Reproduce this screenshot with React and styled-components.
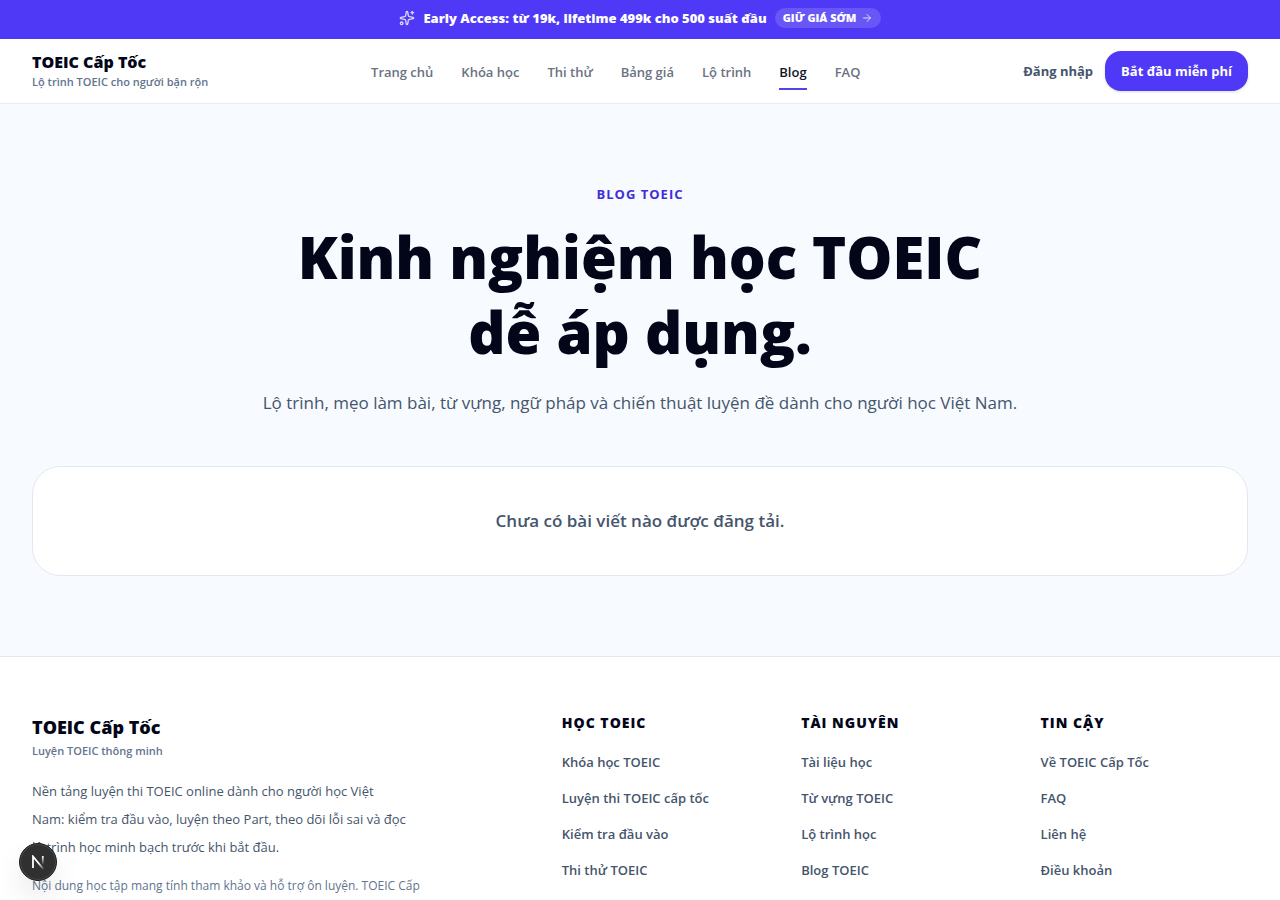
import React from 'react';
import styled, { createGlobalStyle } from 'styled-components';
import { ArrowRight, Sparkles } from 'lucide-react';

const navLinks = ['Trang chủ', 'Khóa học', 'Thi thử', 'Bảng giá', 'Lộ trình', 'Blog', 'FAQ'];

const footerColumns = [
  {
    title: 'Học TOEIC',
    links: ['Khóa học TOEIC', 'Luyện thi TOEIC cấp tốc', 'Kiểm tra đầu vào', 'Thi thử TOEIC'],
  },
  {
    title: 'Tài nguyên',
    links: ['Tài liệu học', 'Từ vựng TOEIC', 'Lộ trình học', 'Blog TOEIC'],
  },
  {
    title: 'Tin cậy',
    links: ['Về TOEIC Cấp Tốc', 'FAQ', 'Liên hệ', 'Điều khoản'],
  },
];

const GlobalStyle = createGlobalStyle`
  * {
    box-sizing: border-box;
    margin: 0;
    padding: 0;
  }

  body {
    font-family: 'Segoe UI', 'Open Sans', 'Noto Sans', sans-serif;
    color: #020618;
    background: #f7fbff;
  }

  a {
    color: inherit;
    text-decoration: none;
  }

  ul {
    list-style: none;
  }
`;

const Banner = styled.div`
  display: flex;
  justify-content: center;
  align-items: center;
  gap: 8px;
  padding: 8px 16px 11px;
  background: #4f39f6;
  color: #fff;
  font-size: 13px;
  font-weight: 800;
  line-height: 20px;

  svg {
    opacity: 0.8;
  }
`;

const BannerLink = styled.a`
  display: flex;
  align-items: center;
  gap: 4px;
  padding: 0 8px;
  border-radius: 10px;
  background: rgba(255, 255, 255, 0.15);
  font-size: 11px;
  font-weight: 800;
  text-transform: uppercase;
`;

const Header = styled.header`
  display: flex;
  justify-content: space-between;
  align-items: center;
  height: 65px;
  padding: 0 32px;
  background: #fff;
  border-bottom: 1px solid #e8ecf2;
`;

const Brand = styled.a`
  display: block;
`;

const BrandName = styled.span`
  display: block;
  font-size: ${(props) => (props.$large ? '18px' : '16px')};
  font-weight: 800;
  line-height: ${(props) => (props.$large ? '28px' : '20px')};
`;

const BrandTagline = styled.span`
  display: block;
  margin-top: 2px;
  color: #62748e;
  font-size: 11px;
  font-weight: 600;
  line-height: 16px;
`;

const Nav = styled.nav`
  display: flex;
  gap: 28px;
`;

const NavLink = styled.a`
  padding: 10px 0 6px;
  border-bottom: 2px solid ${(props) => (props.$active ? '#4f46e5' : 'transparent')};
  color: ${(props) => (props.$active ? '#101828' : '#6a7282')};
  font-size: 13px;
  font-weight: 600;
  line-height: 20px;
`;

const Actions = styled.div`
  display: flex;
  align-items: center;
  gap: 12px;
  font-size: 13px;
  font-weight: 700;
`;

const LoginLink = styled.a`
  color: #45556c;
`;

const StartButton = styled.button`
  height: 40px;
  padding: 0 16px;
  border: 0;
  border-radius: 16px;
  background: #4f39f6;
  box-shadow: 0 1px 3px rgba(0, 0, 0, 0.15);
  color: #fff;
  font: inherit;
  cursor: pointer;
`;

const Main = styled.main`
  padding: 80px 32px;
  text-align: center;
`;

const Eyebrow = styled.p`
  color: #432dd7;
  font-size: 13px;
  font-weight: 700;
  line-height: 20px;
  letter-spacing: 1px;
  text-transform: uppercase;
`;

const Title = styled.h1`
  max-width: 768px;
  margin: 15px auto 0;
  font-size: 58px;
  font-weight: 800;
  line-height: 75px;
`;

const Lead = styled.p`
  margin-top: 18px;
  color: #45556c;
  font-size: 17px;
  line-height: 32px;
`;

const EmptyCard = styled.section`
  margin-top: 47px;
  padding: 40px;
  border: 1px solid #e2e8f0;
  border-radius: 28px;
  background: #fff;
  color: #45556c;
  font-size: 17px;
  font-weight: 600;
  line-height: 28px;
`;

const Footer = styled.footer`
  display: grid;
  grid-template-columns: 12fr 5fr 5fr 5fr;
  gap: 32px;
  padding: 56px 32px;
  border-top: 1px solid #e2e8f0;
  background: #fff;
`;

const About = styled.p`
  max-width: 374px;
  margin-top: 18px;
  color: #45556c;
  font-size: 13px;
  line-height: 28px;
`;

const Disclaimer = styled.p`
  max-width: 400px;
  margin-top: 13px;
  color: #62748e;
  font-size: 12px;
  line-height: 24px;
`;

const FooterTitle = styled.h2`
  font-size: 14px;
  font-weight: 800;
  line-height: 20px;
  letter-spacing: 1px;
  text-transform: uppercase;
`;

const FooterLinks = styled.ul`
  display: grid;
  gap: 16px;
  margin-top: 19px;
  color: #45556c;
  font-size: 13px;
  font-weight: 600;
  line-height: 20px;
`;

const DevButton = styled.button`
  position: fixed;
  left: 19px;
  bottom: 19px;
  display: grid;
  place-items: center;
  width: 38px;
  height: 38px;
  border: 1px solid #1c1c1c;
  border-radius: 50%;
  background: #303030;
  box-shadow: inset 0 0 0 1px #4a4a4a, 0 16px 32px -8px rgba(0, 0, 0, 0.24);
  cursor: pointer;
`;

const DevLogo = () => (
  <svg width="14" height="14" viewBox="0 0 14 14" fill="none">
    <defs>
      <linearGradient id="diagonal" x1="8" y1="8" x2="13" y2="14" gradientUnits="userSpaceOnUse">
        <stop stopColor="#fff" />
        <stop offset="1" stopColor="#fff" stopOpacity="0.1" />
      </linearGradient>
      <linearGradient id="stem" x1="11" y1="1" x2="11" y2="10" gradientUnits="userSpaceOnUse">
        <stop stopColor="#fff" />
        <stop offset="1" stopColor="#fff" stopOpacity="0" />
      </linearGradient>
    </defs>
    <path d="M2 13V1.5L12.4 14" stroke="url(#diagonal)" strokeWidth="1.8" />
    <path d="M11.8 1V10" stroke="url(#stem)" strokeWidth="1.8" />
  </svg>
);

const App = () => {
  return (
    <>
      <GlobalStyle />
      <Banner>
        <Sparkles size={16} />
        <span>Early Access: từ 19k, lifetime 499k cho 500 suất đầu</span>
        <BannerLink href="#">
          Giữ giá sớm
          <ArrowRight size={12} />
        </BannerLink>
      </Banner>

      <Header>
        <Brand href="#">
          <BrandName>TOEIC Cấp Tốc</BrandName>
          <BrandTagline>Lộ trình TOEIC cho người bận rộn</BrandTagline>
        </Brand>
        <Nav>
          {navLinks.map((link) => (
            <NavLink href="#" key={link} $active={link === 'Blog'}>
              {link}
            </NavLink>
          ))}
        </Nav>
        <Actions>
          <LoginLink href="#">Đăng nhập</LoginLink>
          <StartButton type="button">Bắt đầu miễn phí</StartButton>
        </Actions>
      </Header>

      <Main>
        <Eyebrow>Blog TOEIC</Eyebrow>
        <Title>Kinh nghiệm học TOEIC dễ áp dụng.</Title>
        <Lead>Lộ trình, mẹo làm bài, từ vựng, ngữ pháp và chiến thuật luyện đề dành cho người học Việt Nam.</Lead>
        <EmptyCard>Chưa có bài viết nào được đăng tải.</EmptyCard>
      </Main>

      <Footer>
        <div>
          <Brand href="#">
            <BrandName $large>TOEIC Cấp Tốc</BrandName>
            <BrandTagline>Luyện TOEIC thông minh</BrandTagline>
          </Brand>
          <About>
            Nền tảng luyện thi TOEIC online dành cho người học Việt Nam: kiểm tra đầu vào, luyện theo Part, theo dõi
            lỗi sai và đọc lộ trình học minh bạch trước khi bắt đầu.
          </About>
          <Disclaimer>Nội dung học tập mang tính tham khảo và hỗ trợ ôn luyện. TOEIC Cấp</Disclaimer>
        </div>
        {footerColumns.map((column) => (
          <div key={column.title}>
            <FooterTitle>{column.title}</FooterTitle>
            <FooterLinks>
              {column.links.map((link) => (
                <li key={link}>
                  <a href="#">{link}</a>
                </li>
              ))}
            </FooterLinks>
          </div>
        ))}
      </Footer>

      <DevButton type="button" aria-label="Open Next.js Dev Tools">
        <DevLogo />
      </DevButton>
    </>
  );
};

export default App;
